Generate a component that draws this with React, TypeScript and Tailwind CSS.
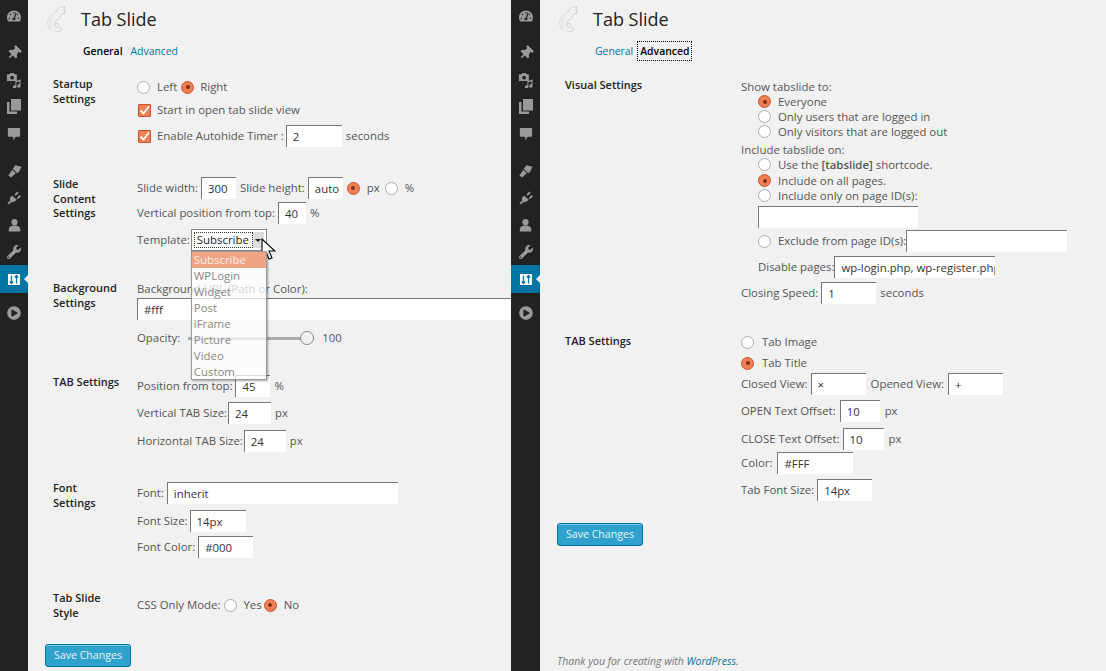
import type { ReactNode } from "react";
import { FaPlayCircle, FaTachometerAlt, FaThumbtack, FaWrench } from "react-icons/fa";

const Radio = ({ on, className = "ml-0" }: { on?: boolean; className?: string }) => (
  <span
    className={`flex h-[13px] w-[13px] shrink-0 items-center justify-center rounded-full border ${className} ${
      on ? "border-[#c9552c] bg-[#ef7f55]" : "border-[#a9adb1] bg-white"
    }`}
  >
    {on && <span className="h-[4px] w-[4px] rounded-full bg-[#7a3016]" />}
  </span>
);

const Checkbox = () => (
  <span className="ml-[1px] flex h-[13px] w-[13px] shrink-0 items-center justify-center rounded-[1px] border border-[#c9552c] bg-[#ef7f55]">
    <svg width="11" height="11" viewBox="0 0 11 11">
      <path d="M1.5 5.5 4.5 8.5 10 1.5" fill="none" stroke="#fff" strokeWidth="1.8" />
    </svg>
  </span>
);

const Input = ({ value, className }: { value?: string; className: string }) => (
  <span
    className={`flex h-[22px] shrink-0 items-center overflow-hidden whitespace-nowrap border-t border-l border-[#777] bg-white pl-[6px] text-[#333] ${className}`}
  >
    {value}
  </span>
);

const Row = ({ className, children }: { className: string; children: ReactNode }) => (
  <div className={`flex items-center whitespace-nowrap ${className}`}>{children}</div>
);

const SaveButton = ({ className }: { className: string }) => (
  <button
    className={`block h-[23px] w-[86px] rounded-[3px] border border-[#0074a2] bg-[#2ea2cc] text-[10.600px] text-[#e8f6fb] shadow-[inset_0_1px_0_#78c8e6] ${className}`}
  >
    Save Changes
  </button>
);

const Logo = () => (
  <svg width="20" height="27" viewBox="0 0 20 27" fill="none" stroke="#c8c8c8" strokeWidth="0.8" className="shrink-0">
    <path d="M15 1c-2 0-4 1-5 3C6 6 2 10 1 15c-1 4 1 8 3 10" strokeDasharray="2 0.7" />
    <path d="M15 1l3-1-1 4 1 3-3 1-2 3c-2 3-5 4-6 7 0 2 2 3 4 3 2 0 4 1 3 3s-4 2-6 1" />
    <path d="M11 5c-3 2-6 5-7 9-1 3-1 6 1 9" strokeDasharray="1.5 1" />
    <path d="M7 19c2-2 4-2 5 0" />
  </svg>
);

// menu icons that the packages don't have in this shape
const MediaIcon = () => (
  <svg width="16" height="16" viewBox="0 0 17 17" fill="currentColor">
    <path d="M1 2.5h3l1-1.500h3l1 1.500h2.500v7H1z" />
    <circle cx="6.500" cy="6" r="2" fill="#222" />
    <path d="M10 9.500 15.500 8v7a1.800 1.800 0 1 1-1.200-1.700V10l-3.300 1v5a1.800 1.800 0 1 1-1-1.600z" />
  </svg>
);

const PagesIcon = () => (
  <svg width="14" height="15" viewBox="0 0 14 15" fill="currentColor">
    <path d="M4 0h10v11.500H4z" />
    <path d="M0 3h2.500v9.500H10V15H0z" />
  </svg>
);

const CommentIcon = () => (
  <svg width="14" height="14" viewBox="0 0 16 16" fill="currentColor">
    <path d="M2 1h12a1 1 0 0 1 1 1v8a1 1 0 0 1-1 1h-4l-3 4v-4H2a1 1 0 0 1-1-1V2a1 1 0 0 1 1-1z" />
  </svg>
);

const BrushIcon = () => (
  <svg width="15" height="14" viewBox="0 0 16 16" fill="currentColor">
    <path d="M9 1.500 16 3l-3 6-2 1.500-5-5z" />
    <path d="M5.500 6.500l4 4L4 15.500 1 13z" />
  </svg>
);

const PlugIcon = () => (
  <svg width="14" height="14" viewBox="0 0 16 16" fill="currentColor">
    <path d="M6 5l5 5-1.500 1.500C8 13 6 13 5 12.500L2 15.500.5 14l3-3C3 10 3 8 4.500 6.500zM8.500 4 12 .5 13.500 2 10 5.500zM11 8l3.500-3.500L16 6l-3.500 3.500z" />
  </svg>
);

const UserIcon = () => (
  <svg width="13" height="14" viewBox="0 0 16 16" fill="currentColor">
    <circle cx="8" cy="4.500" r="3.800" />
    <path d="M1 16v-3c0-3 3-4.500 7-4.500s7 1.500 7 4.500v3z" />
  </svg>
);

const SlidersIcon = () => (
  <svg width="12" height="11" viewBox="0 0 12 11">
    <rect width="12" height="11" fill="#fff" />
    <path d="M3.500 1.500v8M1.800 7.500 3.500 9.500 5.200 7.500M8.500 9.500v-8M6.800 3.500 8.500 1.500 10.200 3.500" fill="none" stroke="#0074a2" strokeWidth="1.300" />
  </svg>
);

const Sidebar = ({ className }: { className: string }) => (
  <aside className={`flex h-full shrink-0 flex-col bg-[#222] text-[#999] ${className}`}>
    <div className="flex h-[32px] items-center justify-center">
      <FaTachometerAlt size={14} />
    </div>
    <div className="mt-[7px] flex h-[27px] items-center justify-center">
      <FaThumbtack size={14} className="rotate-45" />
    </div>
    <div className="flex h-[27px] items-center justify-center">
      <MediaIcon />
    </div>
    <div className="flex h-[27px] items-center justify-center">
      <PagesIcon />
    </div>
    <div className="flex h-[27px] items-center justify-center">
      <CommentIcon />
    </div>
    <div className="mt-[10px] flex h-[27px] items-center justify-center">
      <BrushIcon />
    </div>
    <div className="flex h-[27px] items-center justify-center">
      <PlugIcon />
    </div>
    <div className="flex h-[27px] items-center justify-center">
      <UserIcon />
    </div>
    <div className="flex h-[27px] items-center justify-center">
      <FaWrench size={14} />
    </div>
    <div className="relative flex h-[28px] items-center justify-center bg-[#0074a2]">
      <SlidersIcon />
      <span className="absolute right-0 top-[10px] border-y-[4px] border-r-[4px] border-y-transparent border-r-[#f1f1f1]" />
    </div>
    <div className="mt-[6px] flex h-[27px] items-center justify-center">
      <FaPlayCircle size={14} />
    </div>
  </aside>
);

const Header = () => (
  <div className="flex h-[38px] items-center gap-[14px] pl-[19px]">
    <Logo />
    <h1 className="text-[18px] leading-none text-[#222]">Tab Slide</h1>
  </div>
);

const Cursor = () => (
  <svg width="15" height="23" viewBox="0 0 15 23" className="absolute left-[70px] top-[9px]">
    <path d="M1 1v17l4-4 3 7 3-1-3-7h6z" fill="#fff" stroke="#000" strokeWidth="1.100" />
  </svg>
);

const templates = ["WPLogin", "Widget", "Post", "iFrame", "Picture", "Video", "Custom"];

const TemplateSelect = () => (
  <div className="relative ml-[1px] h-[22px] w-[76px]">
    <div className="flex h-[22px] items-center border border-[#888] bg-white p-[2px]">
      <span className="flex h-full flex-1 items-center border border-dotted border-[#333] pl-[2px] text-[#222]">
        Subscribe
      </span>
      <span className="flex h-full w-[11px] items-center justify-center bg-[#ddd]">
        <span className="border-x-[3px] border-t-[3px] border-x-transparent border-t-[#222]" />
      </span>
    </div>
    <div className="absolute left-0 top-[22px] z-10 h-[129px] w-[76px] border border-[#999] bg-white/75 shadow-[1px_1px_2px_rgba(0,0,0,0.35)]">
      <div className="flex h-[16px] items-center bg-[#f2a584] pl-[2px] text-[#fbeee8]">Subscribe</div>
      {templates.map((t) => (
        <div key={t} className="flex h-[16px] items-center pl-[2px] text-[#888]">
          {t}
        </div>
      ))}
    </div>
    <Cursor />
  </div>
);

const GeneralPanel = () => (
  <main className="min-w-0 flex-1 overflow-hidden">
    <Header />
    <div className="mt-[3px] flex h-[20px] items-center pl-[55px] pt-[2px] text-[10.400px]">
      <span className="font-semibold text-[#000]">General</span>
      <a className="ml-[8px] text-[#0074a2]">Advanced</a>
    </div>

    <section className="mt-[15px] flex pl-[25px]">
      <h3 className="mt-[1px] w-[84px] shrink-0 text-[11px] font-semibold leading-[14.500px] text-[#222]">
        Startup
        <br />
        Settings
      </h3>
      <div>
        <Row className="h-[22px]">
          <Radio />
          <span className="ml-[7px]">Left</span>
          <Radio on className="ml-[4px]" />
          <span className="ml-[6px]">Right</span>
        </Row>
        <Row className="mt-[1px] h-[22px]">
          <Checkbox />
          <span className="ml-[6px]">Start in open tab slide view</span>
        </Row>
        <Row className="mt-[4px] h-[22px]">
          <Checkbox />
          <span className="ml-[6px]">Enable Autohide Timer :</span>
          <Input value="2" className="ml-[2px] w-[56px]" />
          <span className="ml-[4px]">seconds</span>
        </Row>
      </div>
    </section>

    <section className="mt-[30px] flex pl-[25px]">
      <h3 className="w-[84px] shrink-0 text-[11px] font-semibold leading-[14.500px] text-[#222]">
        Slide
        <br />
        Content
        <br />
        Settings
      </h3>
      <div>
        <Row className="h-[22px]">
          <span>Slide width:</span>
          <Input value="300" className="ml-[3px] w-[35px]" />
          <span className="ml-[4px]">Slide height:</span>
          <Input value="auto" className="ml-[3px] w-[35px]" />
          <Radio on className="ml-[4px]" />
          <span className="ml-[7px]">px</span>
          <Radio className="ml-[5px]" />
          <span className="ml-[7px]">%</span>
        </Row>
        <Row className="mt-[3px] h-[22px]">
          <span>Vertical position from top:</span>
          <Input value="40" className="ml-[3px] w-[28px]" />
          <span className="ml-[4px]">%</span>
        </Row>
        <Row className="mt-[5px] h-[22px]">
          <span>Template:</span>
          <TemplateSelect />
        </Row>
      </div>
    </section>

    <section className="mt-[30px] flex pl-[25px]">
      <h3 className="w-[84px] shrink-0 text-[11px] font-semibold leading-[14.500px] text-[#222]">
        Background
        <br />
        Settings
      </h3>
      <div>
        <Row className="h-[16px]">Background URL (Path or Color):</Row>
        <Input value="#fff" className="mt-[1px] w-[400px]" />
        <Row className="mt-[7px] h-[22px]">
          <span>Opacity:</span>
          <span className="relative ml-[8px] h-[3px] w-[126px] bg-[#aaa]">
            <span className="absolute right-0 top-[-6px] h-[14px] w-[14px] rounded-full border border-[#888] bg-[#f1f1f1]" />
          </span>
          <span className="ml-[8px]">100</span>
        </Row>
      </div>
    </section>

    <section className="mt-[26px] flex pl-[25px]">
      <h3 className="w-[84px] shrink-0 text-[11px] font-semibold leading-[14.500px] text-[#222]">TAB Settings</h3>
      <div>
        <Row className="h-[22px]">
          <span>Position from top:</span>
          <Input value="45" className="ml-[3px] w-[35px]" />
          <span className="ml-[4px]">%</span>
        </Row>
        <Row className="mt-[5px] h-[22px]">
          <span>Vertical TAB Size:</span>
          <Input value="24" className="ml-[1px] w-[43px]" />
          <span className="ml-[4px]">px</span>
        </Row>
        <Row className="mt-[6px] h-[22px]">
          <span>Horizontal TAB Size:</span>
          <Input value="24" className="ml-[1px] w-[42px]" />
          <span className="ml-[4px]">px</span>
        </Row>
      </div>
    </section>

    <section className="mt-[30px] flex pl-[25px]">
      <h3 className="mt-[-1px] w-[84px] shrink-0 text-[11px] font-semibold leading-[14.500px] text-[#222]">
        Font
        <br />
        Settings
      </h3>
      <div>
        <Row className="h-[22px]">
          <span>Font:</span>
          <Input value="inherit" className="ml-[3px] w-[231px]" />
        </Row>
        <Row className="mt-[6px] h-[22px]">
          <span>Font Size:</span>
          <Input value="14px" className="ml-[2px] w-[56px]" />
        </Row>
        <Row className="mt-[4px] h-[22px]">
          <span>Font Color:</span>
          <Input value="#000" className="ml-[3px] w-[55px]" />
        </Row>
      </div>
    </section>

    <section className="mt-[36px] flex pl-[25px]">
      <h3 className="mt-[-3px] w-[84px] shrink-0 text-[11px] font-semibold leading-[14.500px] text-[#222]">
        Tab Slide
        <br />
        Style
      </h3>
      <Row className="h-[22px]">
        <span>CSS Only Mode:</span>
        <Radio className="ml-[4px]" />
        <span className="ml-[6px]">Yes</span>
        <Radio on className="ml-[2px]" />
        <span className="ml-[7px]">No</span>
      </Row>
    </section>

    <SaveButton className="ml-[17px] mt-[24px]" />
  </main>
);

const AdvancedPanel = () => (
  <main className="flex min-w-0 flex-1 flex-col overflow-hidden">
    <Header />
    <div className="mt-[3px] flex h-[20px] items-center pl-[55px] text-[10.400px]">
      <a className="pt-[1px] text-[#0074a2]">General</a>
      <span className="ml-[4px] flex h-[20px] items-center border border-dotted border-[#000] px-[2px] pt-[1px] font-semibold text-[#000]">
        Advanced
      </span>
    </div>

    <section className="mt-[18px] flex pl-[25px]">
      <h3 className="mt-[-1px] w-[176px] shrink-0 text-[11px] font-semibold leading-[14.500px] text-[#222]">
        Visual Settings
      </h3>
      <div>
        <Row className="h-[15px]">Show tabslide to:</Row>
        <Row className="h-[15px] pl-[17px]">
          <Radio on />
          <span className="ml-[7px]">Everyone</span>
        </Row>
        <Row className="h-[15px] pl-[17px]">
          <Radio />
          <span className="ml-[7px]">Only users that are logged in</span>
        </Row>
        <Row className="h-[15px] pl-[17px]">
          <Radio />
          <span className="ml-[7px]">Only visitors that are logged out</span>
        </Row>
        <Row className="mt-[3px] h-[15px]">Include tabslide on:</Row>
        <Row className="h-[15px] pl-[17px]">
          <Radio />
          <span className="ml-[7px]">
            Use the <b className="font-semibold">[tabslide]</b> shortcode.
          </span>
        </Row>
        <Row className="mt-[1px] h-[15px] pl-[17px]">
          <Radio on />
          <span className="ml-[7px]">Include on all pages.</span>
        </Row>
        <Row className="h-[15px] pl-[17px]">
          <Radio />
          <span className="ml-[7px]">Include only on page ID(s):</span>
        </Row>
        <Input className="ml-[17px] mt-[3px] w-[160px]" />
        <Row className="mt-[2px] h-[22px] pl-[17px]">
          <Radio />
          <span className="ml-[7px]">Exclude from page ID(s):</span>
          <Input className="w-[161px]" />
        </Row>
        <Row className="mt-[4px] h-[22px] pl-[17px]">
          <span>Disable pages:</span>
          <Input value="wp-login.php, wp-register.php" className="w-[161px]" />
        </Row>
        <Row className="mt-[4px] h-[22px]">
          <span>Closing Speed:</span>
          <Input value="1" className="ml-[3px] w-[55px]" />
          <span className="ml-[4px]">seconds</span>
        </Row>
      </div>
    </section>

    <section className="mt-[28px] flex pl-[25px]">
      <h3 className="mt-[2px] w-[176px] shrink-0 text-[11px] font-semibold leading-[14.500px] text-[#222]">
        TAB Settings
      </h3>
      <div>
        <Row className="h-[20px]">
          <Radio />
          <span className="ml-[8px]">Tab Image</span>
        </Row>
        <Row className="mt-[1px] h-[20px]">
          <Radio on />
          <span className="ml-[8px]">Tab Title</span>
        </Row>
        <Row className="h-[22px]">
          <span>Closed View:</span>
          <Input value="×" className="ml-[3px] w-[55px]" />
          <span className="ml-[5px]">Opened View:</span>
          <Input value="+" className="ml-[4px] w-[55px]" />
        </Row>
        <Row className="mt-[5px] h-[22px]">
          <span>OPEN Text Offset:</span>
          <Input value="10" className="ml-[4px] w-[40px]" />
          <span className="ml-[5px]">px</span>
        </Row>
        <Row className="mt-[6px] h-[22px]">
          <span>CLOSE Text Offset:</span>
          <Input value="10" className="ml-[3px] w-[41px]" />
          <span className="ml-[5px]">px</span>
        </Row>
        <Row className="mt-[2px] h-[22px]">
          <span>Color:</span>
          <Input value="#FFF" className="ml-[5px] w-[76px]" />
        </Row>
        <Row className="mt-[5px] h-[22px]">
          <span>Tab Font Size:</span>
          <Input value="14px" className="ml-[3px] w-[55px]" />
        </Row>
      </div>
    </section>

    <SaveButton className="ml-[17px] mt-[22px]" />
    <p className="mt-auto pb-[3px] pl-[17px] text-[10.500px] italic leading-[14px] text-[#777]">
      Thank you for creating with <a className="text-[#0074a2]">WordPress</a>.
    </p>
  </main>
);

export default function App() {
  return (
    <div className="flex h-[671px] w-[1106px] overflow-hidden bg-[#f1f1f1] font-['Open_Sans',sans-serif] text-[11.400px] text-[#555]">
      <div className="flex h-full w-[511px] shrink-0">
        <Sidebar className="w-[28px]" />
        <GeneralPanel />
      </div>
      <div className="flex h-full flex-1">
        <Sidebar className="w-[29px]" />
        <AdvancedPanel />
      </div>
    </div>
  );
}
